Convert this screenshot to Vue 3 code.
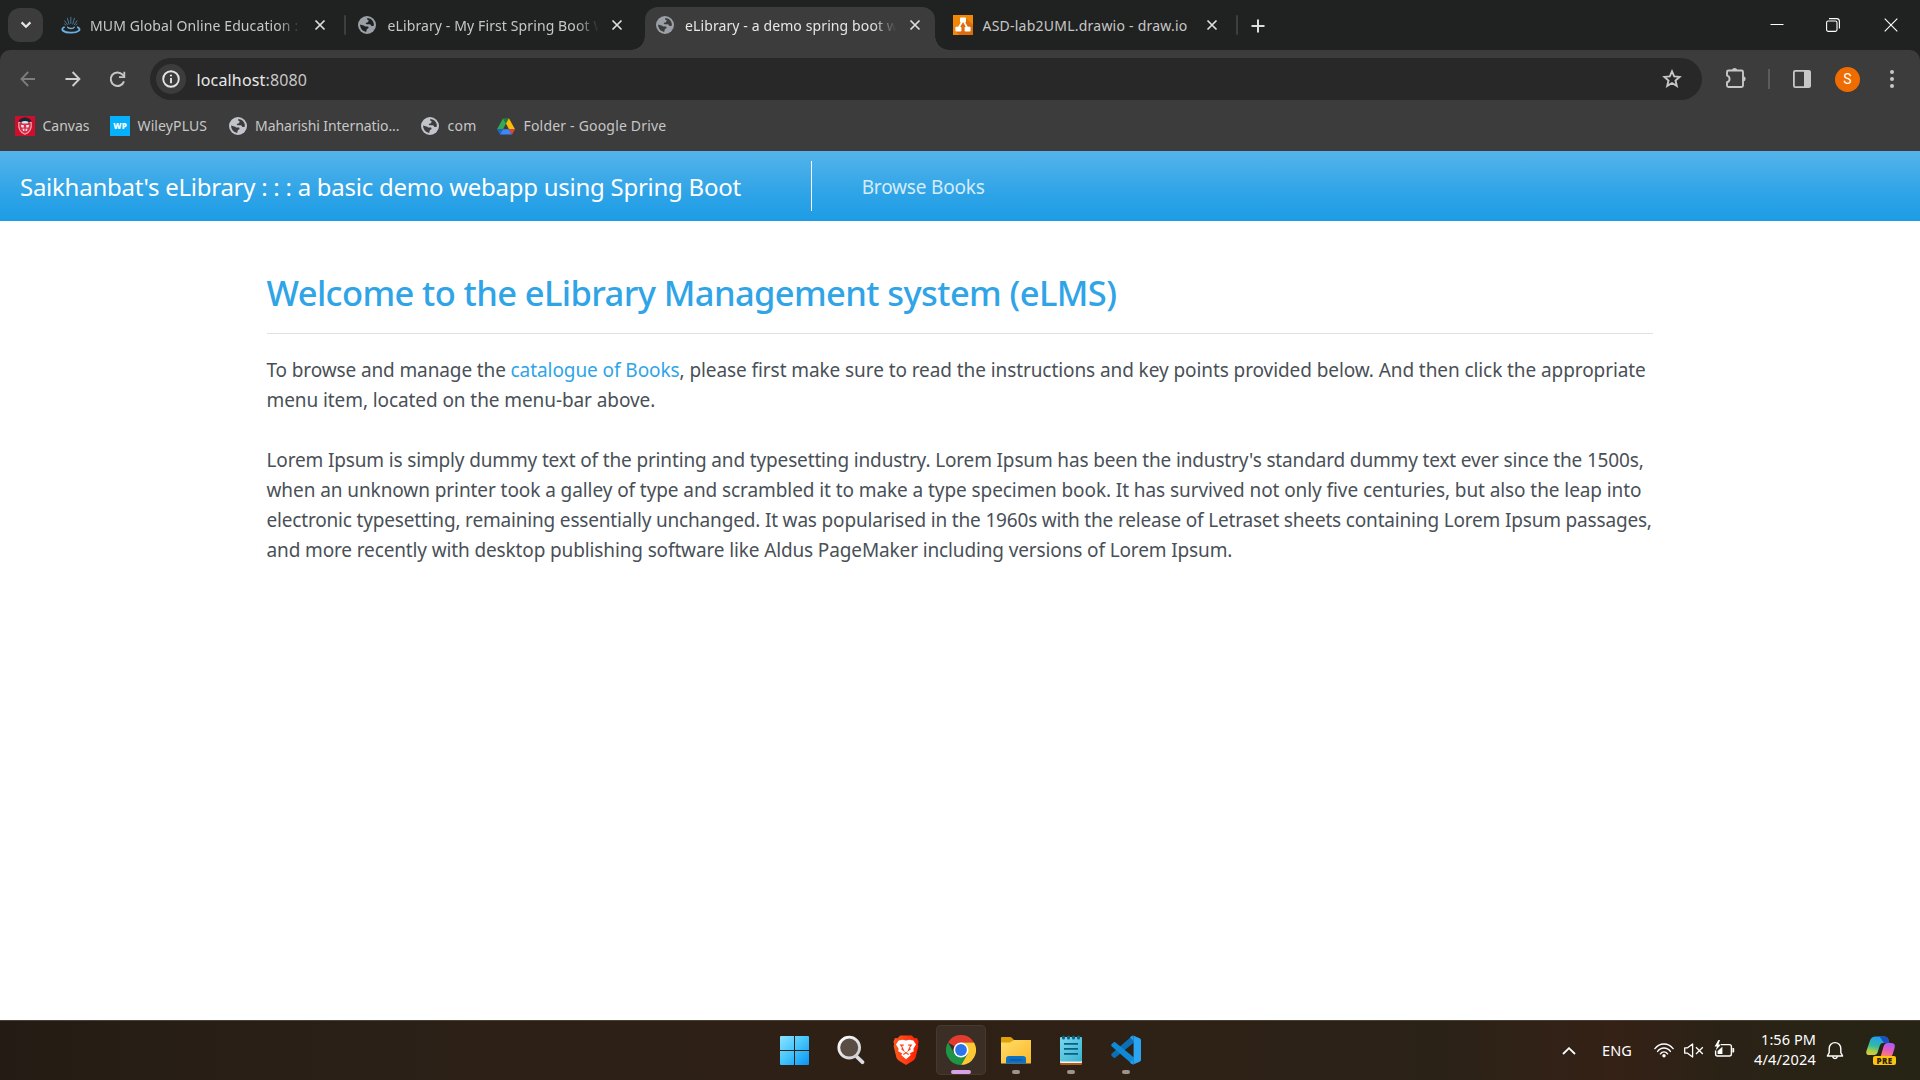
<script setup>
import { h } from 'vue'

const tabs = [
  { id: 'mum', icon: 'spring', title: 'MUM Global Online Education :', faded: true, divider: true },
  { id: 'first', icon: 'globe', title: 'eLibrary - My First Spring Boot W', faded: true },
  { id: 'demo', icon: 'globe', title: 'eLibrary - a demo spring boot w', faded: true, active: true },
  { id: 'drawio', icon: 'drawio', title: 'ASD-lab2UML.drawio - draw.io', divider: true },
]

const bookmarks = [
  { id: 'canvas', title: 'Canvas' },
  { id: 'wiley', title: 'WileyPLUS' },
  { id: 'maharishi', title: 'Maharishi Internatio...' },
  { id: 'com', title: 'com' },
  { id: 'drive', title: 'Folder - Google Drive' },
]

const lorem = [
  { id: 'l1', text: "Lorem Ipsum is simply dummy text of the printing and typesetting industry. Lorem Ipsum has been the industry's standard dummy text ever since the 1500s," },
  { id: 'l2', text: 'when an unknown printer took a galley of type and scrambled it to make a type specimen book. It has survived not only five centuries, but also the leap into' },
  { id: 'l3', text: 'electronic typesetting, remaining essentially unchanged. It was popularised in the 1960s with the release of Letraset sheets containing Lorem Ipsum passages,' },
  { id: 'l4', text: 'and more recently with desktop publishing software like Aldus PageMaker including versions of Lorem Ipsum.' },
]

const GlobeIcon = (props) =>
  h('svg', { width: 18, height: 18, viewBox: '0 0 18 18' }, [
    h('circle', { cx: 9, cy: 9, r: 9, fill: props.tone }),
    h('path', {
      fill: props.hole,
      d: 'M9.2 2.1C12.6 2.1 15.6 4.9 15.9 8.4L15.5 9.9H13.4C12.9 8.6 12 8.2 10.8 8.2H8.4L7.6 6.9L9.9 6.2L10.8 4.4L9.2 3.6ZM2.1 8.6L5.4 9.4C6.6 9.7 7.2 10.6 8.4 10.6H10.2L10.6 12L8.8 13.2L8.2 15.9C4.8 15.6 2.1 12.6 2.1 8.6Z',
    }),
  ])
GlobeIcon.props = ['tone', 'hole']

const CloseIcon = () =>
  h('svg', { width: 12, height: 12, viewBox: '0 0 12 12' }, [
    h('path', { d: 'M1.5 1.5L10.5 10.5M10.5 1.5L1.5 10.5', stroke: 'currentColor', 'stroke-width': 1.7, fill: 'none' }),
  ])
</script>

<template>
  <div class="screen">
    <header class="chrome">
      <div class="tabstrip">
        <button class="tab-search" aria-label="Search tabs">
          <svg width="12" height="8" viewBox="0 0 12 8"><path d="M1.6 1.4L6 5.8L10.4 1.4" fill="none" stroke="#e6e6e6" stroke-width="2.2" /></svg>
        </button>
        <div class="tabs">
          <div v-for="t in tabs" :key="t.id" class="tab" :class="{ active: t.active, divider: t.divider }">
            <span class="favicon">
              <svg v-if="t.icon === 'spring'" width="20" height="18" viewBox="0 0 20 18">
                <g fill="none" stroke="#6aaee2" stroke-linecap="round">
                  <path d="M9.8 7.5V1.2M8 8L6.4 2.2M11.8 8L13.4 2.2M6.4 8.6L3.6 4.8M13.4 8.6L16 4.8M5 9L3.6 8M14.8 9L16 8" stroke-width="0.8" opacity="0.75" />
                  <path d="M6.6 11.2C7.6 13 12.4 13 13.2 11.2" stroke-width="1.4" />
                  <path d="M3 11.2C-1.2 13.6 3 16.8 10 16.6C17 16.8 21 13.6 16.8 11.2" stroke-width="1.9" />
                </g>
              </svg>
              <svg v-else-if="t.icon === 'drawio'" width="20" height="20" viewBox="0 0 20 20">
                <rect width="20" height="20" fill="#f08705" />
                <path d="M12.5 3L20 10V20H6.5L3 16.5L9 9Z" fill="#df6c0c" />
                <path d="M9 7L5.5 13M11 7L14.5 13" stroke="#fff" stroke-width="1.6" />
                <rect x="7" y="2.6" width="6" height="5" rx="0.8" fill="#fff" />
                <rect x="2.4" y="11.8" width="6" height="4.8" rx="0.8" fill="#fff" />
                <rect x="11.6" y="11.8" width="6" height="4.8" rx="0.8" fill="#fff" />
              </svg>
              <GlobeIcon v-else tone="#9aa0a6" :hole="t.active ? '#3c3c3c' : '#202221'" />
            </span>
            <span class="tab-title" :class="[{ faded: t.faded }, 'title-' + t.id]">{{ t.title }}</span>
            <span class="tab-close"><CloseIcon /></span>
          </div>
        </div>
        <button class="new-tab" aria-label="New tab">
          <svg width="14" height="14" viewBox="0 0 14 14"><path d="M7 0.5V13.5M0.5 7H13.5" stroke="#dedede" stroke-width="2" /></svg>
        </button>
        <div class="window-controls">
          <svg width="14" height="14" viewBox="0 0 14 14"><path d="M0.5 6.5H13.5" stroke="#fff" /></svg>
          <svg width="14" height="14" viewBox="0 0 14 14"><g fill="none" stroke="#fff" stroke-width="1.1"><rect x="0.6" y="3" width="10.4" height="10.4" rx="1.6" /><path d="M3 0.6H10.6C12.2 0.6 13.4 1.8 13.4 3.4V10.6" /></g></svg>
          <svg width="14" height="14" viewBox="0 0 14 14"><path d="M0.7 0.7L13.3 13.3M13.3 0.7L0.7 13.3" stroke="#fff" stroke-width="1.1" /></svg>
        </div>
      </div>

      <div class="toolbar">
        <div class="nav">
          <svg width="16" height="16" viewBox="0 0 16 16"><path d="M15 8H1.6M8.2 1L1.4 8L8.2 15" fill="none" stroke="#7d7d7d" stroke-width="1.8" /></svg>
          <svg width="16" height="16" viewBox="0 0 16 16"><path d="M0.5 8H14M7.6 1L14.4 8L7.6 15" fill="none" stroke="#d0d0d0" stroke-width="1.9" /></svg>
          <svg width="17" height="17" viewBox="0 0 17 17"><path d="M15 10.4A6.8 6.8 0 1 1 13.6 3.6L15 5.2" fill="none" stroke="#c7c7c7" stroke-width="2" /><path d="M16.2 0.8V7H10V5.2H14.4V0.8Z" fill="#c7c7c7" /></svg>
        </div>
        <div class="omnibox">
          <span class="site-info">
            <svg width="18" height="18" viewBox="0 0 18 18"><circle cx="9" cy="9" r="7.8" fill="none" stroke="#e3e3e3" stroke-width="1.9" /><path d="M9 8V13.2" stroke="#e3e3e3" stroke-width="1.9" /><circle cx="9" cy="5.5" r="1.1" fill="#e3e3e3" /></svg>
          </span>
          <span class="url">localhost<span class="port">:8080</span></span>
          <svg class="star" width="20" height="20" viewBox="0 0 20 20"><path d="M10 2.4L12.2 7.4L17.6 7.9L13.5 11.5L14.8 16.9L10 14L5.2 16.9L6.5 11.5L2.4 7.9L7.8 7.4Z" fill="none" stroke="#c7c7c7" stroke-width="1.9" /></svg>
        </div>
        <div class="actions">
          <svg class="puzzle" width="22" height="22" viewBox="0 0 22 22">
            <path d="M2 5Q2 3.5 3.5 3.5H16.5Q18 3.5 18 5V18.5Q18 20 16.5 20H3.5Q2 20 2 18.5V15.2C5.4 14.4 5.4 9.4 2 8.6Z" fill="none" stroke="#c7c7c7" stroke-width="1.9" stroke-linejoin="round" />
            <path d="M7 3.5A2.6 2.6 0 0 1 12.2 3.5ZM18 9.2A2.6 2.6 0 0 1 18 14.4Z" fill="#c7c7c7" />
          </svg>
          <span class="sep"></span>
          <svg class="panel" width="18" height="18" viewBox="0 0 18 18"><rect x="0.9" y="0.9" width="16.2" height="16.2" rx="1.4" fill="none" stroke="#c7c7c7" stroke-width="1.8" /><rect x="11" y="1" width="6.4" height="16" fill="#c7c7c7" /></svg>
          <span class="avatar">S</span>
          <svg class="kebab" width="4" height="18" viewBox="0 0 4 18" fill="#c7c7c7"><circle cx="2" cy="2" r="2" /><circle cx="2" cy="9" r="2" /><circle cx="2" cy="16" r="2" /></svg>
        </div>
      </div>

      <div class="bookmarks">
        <div v-for="b in bookmarks" :key="b.id" class="bookmark" :class="'bm-' + b.id">
          <svg v-if="b.id === 'canvas'" width="20" height="20" viewBox="0 0 20 20">
            <rect width="20" height="20" fill="#ce0e2d" />
            <path d="M3.8 6.5C3.2 11 4 16 10 18.2C16 16 16.8 11 16.2 6.5Z" fill="#d8304a" stroke="#f0a5b0" stroke-width="1.1" />
            <path d="M3.6 4.6L6 2.4L10 1.2L14 2.4L16.4 4.6L14.6 6.4H5.4Z" fill="#1d2433" />
            <path d="M6.6 5.8C8.5 4.6 11.5 4.6 13.4 5.8L12.6 7.4H7.4Z" fill="#dfe6ea" />
            <path d="M5.8 9H8.8V11.4H6.6ZM14.2 9H11.2V11.4H13.4ZM7.4 12.8H9.4V15H8.2ZM12.6 12.8H10.6V15H11.8Z" fill="#fbe9ec" />
          </svg>
          <span v-else-if="b.id === 'wiley'" class="wp">WP</span>
          <svg v-else-if="b.id === 'drive'" width="18" height="17" viewBox="0 0 18 17">
            <path d="M6.1 0.3L9 5.4L6 11.2H0Z" fill="#34a853" />
            <path d="M6.1 0.3H11.9L9 5.4Z" fill="#188038" />
            <path d="M11.9 0.3L18 11.2H12L9 5.4Z" fill="#fbbc04" />
            <path d="M0 11.2H6L3 16.4Z" fill="#1967d2" />
            <path d="M6 11.2H12L15 16.4H3Z" fill="#4285f4" />
            <path d="M12 11.2H18L15 16.4Z" fill="#ea4335" />
          </svg>
          <GlobeIcon v-else tone="#c3c4cb" hole="#3c3c3c" />
          <span class="bm-title">{{ b.title }}</span>
        </div>
      </div>
    </header>

    <nav class="site-nav">
      <span class="brand">Saikhanbat's eLibrary : : : a basic demo webapp using Spring Boot</span>
      <span class="rule"></span>
      <a class="nav-link">Browse Books</a>
    </nav>

    <main class="content">
      <h1>Welcome to the eLibrary Management system (eLMS)</h1>
      <hr />
      <p>
        <span class="line"><span class="i1">To browse and manage the </span><a class="catalogue">catalogue of Books</a><span class="i2">, please first make sure to read the instructions and key points provided below. And then click the appropriate</span></span>
        <span class="line i3">menu item, located on the menu-bar above.</span>
      </p>
      <p>
        <span v-for="l in lorem" :key="l.id" class="line" :class="l.id">{{ l.text }}</span>
      </p>
    </main>

    <footer class="taskbar">
      <div class="side"></div>
      <div class="apps">
        <span class="app">
          <svg class="win" width="29" height="29" viewBox="0 0 29 29">
            <defs><linearGradient id="win" gradientUnits="userSpaceOnUse" x1="0" y1="0" x2="29" y2="29"><stop offset="0" stop-color="#8ce3ff" /><stop offset="0.5" stop-color="#42c4fb" /><stop offset="1" stop-color="#0a93f5" /></linearGradient></defs>
            <path d="M0 1Q0 0 1 0H14V14H0ZM15 0H28Q29 0 29 1V14H15ZM0 15H14V29H1Q0 29 0 28ZM15 15H29V28Q29 29 28 29H15Z" fill="url(#win)" />
          </svg>
        </span>
        <span class="app">
          <svg width="28" height="30" viewBox="0 0 28 30">
            <defs><linearGradient id="lens" x1="0" y1="0" x2="1" y2="1"><stop offset="0" stop-color="#fff" /><stop offset="1" stop-color="#c9c9cd" /></linearGradient></defs>
            <path d="M19 21L25.4 27.2" stroke="#dcdce2" stroke-width="3.8" stroke-linecap="round" />
            <circle cx="12.2" cy="12.6" r="10.4" fill="#5a4d43" stroke="url(#lens)" stroke-width="2.8" />
          </svg>
        </span>
        <span class="app">
          <svg width="26" height="30" viewBox="0 0 26 30">
            <defs><linearGradient id="brave" x1="0" x2="1"><stop offset="0" stop-color="#ff5a1c" /><stop offset="0.55" stop-color="#ff3a12" /><stop offset="1" stop-color="#ff1d00" /></linearGradient></defs>
            <path d="M7.2 0.6H18.8L21.4 3.2L24 3L25.6 6.8L24.8 9.4L25.4 11L22.6 22.4Q22 24.4 20 25.8L13 30L6 25.8Q4 24.4 3.4 22.4L0.6 11L1.2 9.4L0.4 6.8L2 3L4.6 3.2Z" fill="url(#brave)" />
            <path d="M13 5.6L16.4 4.8L20.4 5.6L23 9.6L20.4 13.8L20.8 16.2L16.6 18.4L17.8 20L13 24.2L8.2 20L9.4 18.4L5.2 16.2L5.6 13.8L3 9.6L5.6 5.6L9.6 4.8Z" fill="#fff" />
            <path d="M6.6 9.4L11 9.6L10.6 10.8H9L11.6 16.4L13 17.2L14.4 16.4L17 10.8H15.4L15 9.6L19.4 9.4L17.2 12.4L17.6 14.6L13.6 17.6L16 19L15.4 20L13 18.6L10.6 20L10 19L12.4 17.6L8.4 14.6L8.8 12.4Z" fill="#ff3d14" />
          </svg>
        </span>
        <span class="app current">
          <svg width="30" height="30" viewBox="0 0 30 30">
            <path d="M15 15L2 7.5A15 15 0 0 1 28 7.5H15Z" fill="#e33b2e" />
            <path d="M15 7.5H28A15 15 0 0 1 15 30L21.5 18.75Z" fill="#fcc934" />
            <path d="M21.5 18.75L15 30A15 15 0 0 1 2 7.5L8.5 18.75Z" fill="#1e9446" />
            <circle cx="15" cy="15" r="7.5" fill="#fff" />
            <circle cx="15" cy="15" r="5.9" fill="#2d74ea" />
          </svg>
          <i class="dot"></i>
        </span>
        <span class="app">
          <svg width="30" height="28" viewBox="0 0 30 28">
            <defs><linearGradient id="fold" x1="0" y1="0" x2="1" y2="1"><stop offset="0" stop-color="#ffdd68" /><stop offset="1" stop-color="#fbb82a" /></linearGradient></defs>
            <path d="M0 8V2Q0 1 1 1H9Q10 1 10.8 1.8L13 4V8Z" fill="#dfa00a" />
            <path d="M0 6.4H9L13 4H30V27.4H0Z" fill="url(#fold)" />
            <path d="M5 27.4V23Q5 20 8 20H22Q25 20 25 23V27.4Z" fill="#0f71c6" />
            <path d="M8.5 24H21.5" stroke="#0a4f90" />
          </svg>
          <i class="dot"></i>
        </span>
        <span class="app">
          <svg width="22" height="30" viewBox="0 0 22 30">
            <defs><linearGradient id="note" x1="0" y1="0" x2="1" y2="1"><stop offset="0" stop-color="#7ad8ec" /><stop offset="1" stop-color="#38b2d3" /></linearGradient></defs>
            <rect y="20" width="22" height="10" rx="1" fill="#b55a12" />
            <rect y="18" width="22" height="10" rx="1" fill="#f4f4f4" />
            <rect y="2" width="22" height="24.6" rx="1" fill="url(#note)" />
            <path d="M4 8.8H18M4 13.8H18M4 18.8H18" stroke="#0b5f80" stroke-width="1.8" />
            <g fill="#0c6683"><rect x="2" y="0.4" width="3" height="4" rx="1.5" /><rect x="7" y="0.4" width="3" height="4" rx="1.5" /><rect x="12" y="0.4" width="3" height="4" rx="1.5" /><rect x="17" y="0.4" width="3" height="4" rx="1.5" /></g>
          </svg>
          <i class="dot"></i>
        </span>
        <span class="app">
          <svg width="30" height="30" viewBox="0 0 30 30">
            <path d="M0.6 18.8L21.6 0.4L23 7.6L4.2 22.8Q3.2 23.4 2.4 22.6L0.8 21Q-0.2 20 0.6 18.8Z" fill="#0b6fb8" />
            <path d="M0.6 11.2L21.6 29.6L23 22.4L4.2 7.2Q3.2 6.6 2.4 7.4L0.8 9Q-0.2 10 0.6 11.2Z" fill="#1089d4" />
            <path d="M21.6 0.2L28.6 3.2Q30 3.8 30 5.2V24.8Q30 26.2 28.6 26.8L21.6 29.8Q22.6 29 22.6 27V3Q22.6 1 21.6 0.2Z" fill="#2aa5f1" />
            <path d="M20 1.4Q22.6 -0.4 22.6 3.4V26.6Q22.6 30.4 20 28.6L19 27.6L22.6 24V6L19 2.4Z" fill="#259cec" />
          </svg>
          <i class="dot"></i>
        </span>
      </div>
      <div class="side tray">
        <svg class="chev" width="14" height="8" viewBox="0 0 14 8"><path d="M1 7L7 1.2L13 7" fill="none" stroke="#fff" stroke-width="1.8" /></svg>
        <span class="lang">ENG</span>
        <svg class="wifi" width="20" height="15" viewBox="0 0 20 15"><g fill="none" stroke="#fff" stroke-width="1.4" stroke-linecap="round"><path d="M0.9 5.6C5.8 -0.6 14.2 -0.6 19.1 5.6" /><path d="M3.6 8.4C7 3.8 13 3.8 16.4 8.4" /><path d="M6.4 10.8C8.2 8.2 11.8 8.2 13.6 10.8" /></g><circle cx="10" cy="12.8" r="1.7" fill="#fff" /></svg>
        <svg class="vol" width="20" height="15" viewBox="0 0 20 15"><path d="M0.7 4.8H3.6L8.6 0.9V14.1L3.6 10.2H0.7Z" fill="none" stroke="#fff" stroke-width="1.3" stroke-linejoin="round" /><path d="M12 4.2L18.8 11M18.8 4.2L12 11" stroke="#fff" stroke-width="1.3" /></svg>
        <svg class="bat" width="21" height="18" viewBox="0 0 21 18"><path d="M7 4.6H15.4Q17.4 4.6 17.4 6.6V14Q17.4 16 15.4 16H3.4Q1.6 16 1.6 14V10.4" fill="none" stroke="#fff" stroke-width="1.4" /><path d="M18.4 8H19.6Q20.2 8 20.2 8.8V11.8Q20.2 12.6 19.6 12.6H18.4Z" fill="#fff" /><path d="M3.6 14V11L8.4 6.8V14ZM4.4 0L0.6 6.4H3L1.6 10.6L7 4.6H4.4L6 0Z" fill="#fff" /></svg>
        <div class="clock"><span class="time">1:56 PM</span><span class="date">4/4/2024</span></div>
        <svg class="bell" width="18" height="19" viewBox="0 0 18 19"><path d="M3.2 11.6V7.4A5.8 5.8 0 0 1 14.8 7.4V11.6L16.6 15H1.4Z" fill="none" stroke="#fff" stroke-width="1.4" stroke-linejoin="round" /><path d="M6.4 15.4Q9 19.8 11.6 15.4" fill="none" stroke="#fff" stroke-width="1.4" /></svg>
        <div class="copilot">
          <svg width="30" height="22" viewBox="0 0 30 22">
            <defs>
              <linearGradient id="cpa" x1="0.3" y1="0" x2="0" y2="1"><stop offset="0" stop-color="#20a0ee" /><stop offset="0.45" stop-color="#35b8a0" /><stop offset="0.75" stop-color="#a8cf4a" /><stop offset="1" stop-color="#f6c431" /></linearGradient>
              <linearGradient id="cpb" x1="0.6" y1="0" x2="0.3" y2="1"><stop offset="0" stop-color="#a95cf4" /><stop offset="0.5" stop-color="#e45bc0" /><stop offset="1" stop-color="#ff8a55" /></linearGradient>
            </defs>
            <path d="M13 0.4H18.6Q21.4 0.4 22.2 3L23.4 7H17Q14.6 7 13.8 9.4L11.4 17Q10.6 19 8.2 19H3.4Q-0.8 19 0.6 14.4L4 4.6Q5.4 0.4 9.6 0.4Z" fill="url(#cpa)" />
            <path d="M13.6 0.4H18.6Q21.4 0.4 22.2 3L23.4 7H18Z" fill="#1b4fc4" />
            <path d="M17.4 11Q18.4 7 21.6 7H25Q30 7 28.6 12L26.4 19Q25.6 21 23 21H14.6Z" fill="url(#cpb)" />
          </svg>
          <span class="pre">PRE</span>
        </div>
      </div>
    </footer>
  </div>
</template>

<style>
body { margin: 0; }
</style>

<style scoped>
.screen { display: flex; flex-direction: column; width: 1920px; height: 1080px; overflow: hidden; background: #fff; font-family: "Noto Sans", "Open Sans", sans-serif; white-space: nowrap; }
svg { display: block; flex: none; }
button { border: 0; padding: 0; background: none; display: flex; align-items: center; justify-content: center; }

.chrome { background: #202221; flex: none; height: 151px; }
.tabstrip { display: flex; height: 50px; }
.tab-search { width: 35px; height: 34px; margin: 8px 0 0 8px; border-radius: 12px; background: #3c3c3c; }
.tabs { display: flex; gap: 7.5px; margin-left: 6.5px; }
.tab { position: relative; box-sizing: border-box; display: flex; align-items: center; width: 290px; height: 43px; margin-top: 7px; padding: 0 14px 7px 11px; color: #c7c7c7; }
.tab.active { background: #3c3c3c; border-radius: 13px 13px 0 0; color: #e6e6e6; }
.tab.active::before, .tab.active::after { content: ""; position: absolute; bottom: 0; width: 14px; height: 14px; }
.tab.active::before { left: -14px; background: radial-gradient(circle at 0 0, transparent 13.5px, #3c3c3c 14px); }
.tab.active::after { right: -14px; background: radial-gradient(circle at 100% 0, transparent 13.5px, #3c3c3c 14px); }
.tab.divider::after { content: ""; position: absolute; right: -6px; top: 8px; width: 2px; height: 20px; border-radius: 1px; background: #3d3f3e; }
.favicon { width: 20px; flex: none; }
.tab-title { flex: none; width: 221px; margin: 2px 0 0 9.5px; font-size: 14px; line-height: 22px; letter-spacing: 0.11px; }
.title-drawio { letter-spacing: 0.23px; }
.tab-title.faded { mask-image: linear-gradient(90deg, #000 188px, transparent 211px); }
.tab-close { margin-left: auto; color: #dedede; }
.new-tab { width: 14px; margin-left: 19px; margin-top: 1px; }
.window-controls { display: flex; align-items: flex-start; gap: 42px; margin-left: auto; padding: 18px 22px 0 0; }
.window-controls svg:last-child { margin-left: 2px; }

.toolbar { display: flex; align-items: center; box-sizing: border-box; height: 54px; padding: 4px 26px 0 20px; background: #3c3c3c; border-radius: 10px 10px 0 0; }
.nav { display: flex; align-items: center; gap: 28.5px; width: 130px; }
.omnibox { display: flex; align-items: center; box-sizing: border-box; width: 1552px; height: 42px; padding: 0 20px 0 6px; border-radius: 21px; background: #282828; }
.site-info { display: flex; align-items: center; justify-content: center; width: 30px; height: 30px; border-radius: 50%; background: #3c3c3c; }
.url { margin: 1px 0 0 10.5px; font-size: 16px; letter-spacing: 0.15px; color: #e8e8e8; }
.port { color: #c7c7c7; }
.star { margin-left: auto; }
.actions { display: flex; align-items: center; flex: 1; }
.puzzle { margin: -3px 0 0 23px; }
.sep { width: 2px; height: 20px; margin-left: 21px; background: #5c5c5c; }
.panel { margin-left: 23px; }
.avatar { width: 25px; height: 25px; margin-left: 24px; border-radius: 50%; background: #ef6c00; color: #fff; font: 14px/25px Roboto, sans-serif; text-align: center; }
.kebab { margin-left: auto; }

.bookmarks { display: flex; align-items: center; height: 47px; padding-left: 15px; background: #3c3c3c; color: #c7c7c7; font-size: 14px; line-height: 22px; }
.bookmark { display: flex; align-items: center; gap: 8px; height: 44px; padding-bottom: 3px; }
.bm-canvas { width: 95px; gap: 7.5px; }
.bm-wiley { width: 119px; letter-spacing: 0.12px; gap: 7.5px; }
.bm-maharishi { width: 192px; letter-spacing: -0.07px; }
.bm-com { width: 76px; letter-spacing: 0.25px; gap: 8.5px; }
.bm-drive { letter-spacing: 0.19px; gap: 8.5px; }
.bm-title { margin-top: -1px; }
.wp { width: 20px; height: 20px; background: #06b0fb; color: #fff; font: 900 8px/20px "Open Sans", sans-serif; text-align: center; letter-spacing: 0; }

.site-nav { display: flex; align-items: center; flex: none; height: 70px; padding-left: 20px; background: linear-gradient(#54b4eb, #2fa4e7 60%, #1d9ce5); color: #fff; }
.brand { width: 791px; font-size: 24px; letter-spacing: -0.26px; }
.rule { width: 1px; height: 50px; background: #fff; }
.nav-link { margin: 2px 0 0 49.7px; font-size: 19px; letter-spacing: -0.185px; color: #d5ecfa; }

.content { flex: 1; width: 1386.5px; padding: 50px 0 0 266.5px; color: #495057; }
h1 { margin: 0; font-size: 34.5px; font-weight: 500; line-height: 44px; letter-spacing: -0.6px; color: #2fa4e7; }
hr { height: 1px; margin: 18px 0 21px; border: 0; background: #e2e2e3; }
p { margin: 0 0 30px; font-size: 19px; line-height: 30px; }
.line { display: block; white-space: pre; }
.catalogue { color: #2fa4e7; letter-spacing: -0.075px; }
.i1 { letter-spacing: -0.12px; }
.i2 { letter-spacing: -0.083px; }
.i3 { letter-spacing: -0.085px; }
.l1 { letter-spacing: -0.148px; }
.l2 { letter-spacing: -0.081px; }
.l3 { letter-spacing: -0.176px; }
.l4 { letter-spacing: -0.13px; }

.taskbar { display: flex; flex: none; box-sizing: border-box; height: 60px; border-top: 1px solid #4a4036; background: linear-gradient(90deg, #241c14, #2b2017 20%, #2f2015 48%, #2e2116 60%, #2b2217 75%, #352116 84%, #2a2216 90%, #262414); color: #fff; }
.side { flex: 1; }
.apps { display: flex; gap: 5px; padding-top: 4px; width: 380px; }
.side:first-child { flex: none; width: 771px; }
.app { position: relative; display: flex; align-items: center; justify-content: center; width: 50px; height: 50px; border-radius: 5px; }
.win { margin-right: 3px; }
.current { background: #3b2e25; box-shadow: inset 0 0 0 1px #453930; }
.dot { position: absolute; left: 21px; bottom: 1px; width: 8px; height: 4px; border-radius: 2px; background: #9b938c; }
.current .dot { left: 15px; width: 20px; background: #d9a1e8; }
.tray { display: flex; align-items: center; font-size: 14.5px; padding-right: 24px; justify-content: flex-end; }
.lang { margin: -2px 0 0 26px; width: 30px; letter-spacing: 0.1px; }
.wifi { margin-left: 22px; }
.vol { margin-left: 10px; }
.bat { margin: -4px 0 0 10px; }
.clock { display: flex; flex-direction: column; align-items: flex-end; width: 66px; margin: -3px 0 0 15px; line-height: 20px; }
.time { letter-spacing: 0.07px; }
.date { letter-spacing: 0.18px; }
.bell { margin-left: 10px; }
.copilot { position: relative; width: 30px; height: 29px; margin-left: 22px; }
.pre { position: absolute; left: 7px; bottom: 0; width: 23px; height: 9px; border-radius: 2px; background: #fdc40e; color: #2b2109; font: 800 8px/9px "Open Sans", sans-serif; letter-spacing: 0.4px; text-align: center; }
</style>
